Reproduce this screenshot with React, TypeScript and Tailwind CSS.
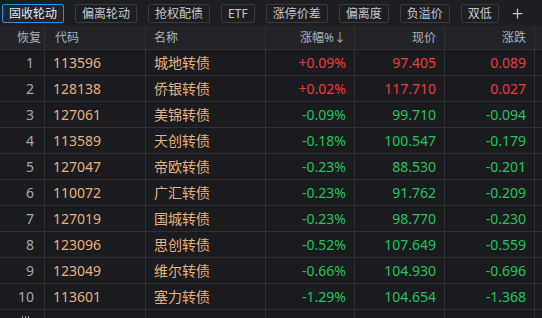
import { Plus } from "lucide-react";

type Row = {
    idx: number
    code: string
    name: string
    pct: string
    price: string
    chg: string
}

const rows: Row[] = [
    { idx: 1, code: "113596", name: "城地转债", pct: "+0.09%", price: "97.405", chg: "0.089" },
    { idx: 2, code: "128138", name: "侨银转债", pct: "+0.02%", price: "117.710", chg: "0.027" },
    { idx: 3, code: "127061", name: "美锦转债", pct: "-0.09%", price: "99.710", chg: "-0.094" },
    { idx: 4, code: "113589", name: "天创转债", pct: "-0.18%", price: "100.547", chg: "-0.179" },
    { idx: 5, code: "127047", name: "帝欧转债", pct: "-0.23%", price: "88.530", chg: "-0.201" },
    { idx: 6, code: "110072", name: "广汇转债", pct: "-0.23%", price: "91.762", chg: "-0.209" },
    { idx: 7, code: "127019", name: "国城转债", pct: "-0.23%", price: "98.770", chg: "-0.230" },
    { idx: 8, code: "123096", name: "思创转债", pct: "-0.52%", price: "107.649", chg: "-0.559" },
    { idx: 9, code: "123049", name: "维尔转债", pct: "-0.66%", price: "104.930", chg: "-0.696" },
    { idx: 10, code: "113601", name: "塞力转债", pct: "-1.29%", price: "104.654", chg: "-1.368" },
]

const tabs = ["固收轮动", "偏离轮动", "抢权配债", "ETF", "涨停价差", "偏离度", "负溢价", "双低"]

function App() {
    return (
        <div
            className="h-[318px] w-[542px] overflow-hidden bg-[#1b1c20] text-[14px]"
            style={{ fontFamily: '"Noto Sans", "Noto Sans CJK SC", sans-serif' }}
        >
            {/* Tab bar */}
            <div className="flex h-[26px] items-start gap-[11px] bg-[#1e1f23] pl-[2px] pt-[4px]">
                {tabs.map((t, i) => (
                    <button
                        key={t}
                        className={
                            i === 0
                                ? "flex h-[19px] items-center rounded-[2px] border border-[#1d8fe6] bg-[#1f2630] px-[6px] text-[12px] leading-none text-[#e6e9ee]"
                                : "flex h-[19px] items-center rounded-[2px] border border-[#3a3b40] bg-[#1e1f23] px-[6px] text-[12px] leading-none text-[#c3c6cc]"
                        }
                    >
                        {t}
                    </button>
                ))}
                <div className="flex h-[19px] items-center text-[#c8c8c8]">
                    <Plus size={15} strokeWidth={2} />
                </div>
            </div>

            {/* Header */}
            <div className="flex h-[24px] items-center border-b border-[#303136] bg-[#232428] text-[12px] text-[#a9b2be]">
                <div className="flex h-full w-[45px] items-center justify-end border-r border-[#303136] pr-[3px]">恢复</div>
                <div className="flex h-full w-[101px] items-center border-r border-[#303136] pl-[10px]">代码</div>
                <div className="flex h-full w-[120px] items-center border-r border-[#303136] pl-[8px]">名称</div>
                <div className="flex h-full w-[89px] items-center justify-end border-r border-[#303136] pr-[8px]">涨幅%↓</div>
                <div className="flex h-full w-[90px] items-center justify-end border-r border-[#303136] pr-[8px]">现价</div>
                <div className="flex h-full w-[90px] items-center justify-end border-r border-[#303136] pr-[8px]">涨跌</div>
                <div className="h-full flex-1" />
            </div>

            {/* Rows */}
            {rows.map((r) => {
                const color = r.pct.startsWith("-") ? "text-[#20c45a]" : "text-[#f0383c]"
                return (
                    <div key={r.idx} className="flex h-[26px] items-center border-b border-[#303136]">
                        <div className="flex h-full w-[45px] items-center justify-end border-r border-[#303136] pr-[10px] text-[#a6a7ab]">
                            {r.idx}
                        </div>
                        <div className="flex h-full w-[101px] items-center border-r border-[#303136] pl-[8px] text-[#e6b07c]">
                            {r.code}
                        </div>
                        <div className="flex h-full w-[120px] items-center border-r border-[#303136] pl-[8px] text-[#e6b07c]">
                            {r.name}
                        </div>
                        <div className={`flex h-full w-[89px] items-center justify-end border-r border-[#303136] pr-[8px] ${color}`}>
                            {r.pct}
                        </div>
                        <div className={`flex h-full w-[90px] items-center justify-end border-r border-[#303136] pr-[8px] ${color}`}>
                            {r.price}
                        </div>
                        <div className={`flex h-full w-[90px] items-center justify-end border-r border-[#303136] pr-[8px] ${color}`}>
                            {r.chg}
                        </div>
                        <div className="h-full flex-1" />
                    </div>
                )
            })}

            {/* Partially visible next row */}
            <div className="flex h-[26px]">
                <div className="flex h-full w-[45px] items-start gap-[2px] border-r border-[#303136] pl-[22px] pt-[6px]">
                    <span className="h-[3px] w-[1px] bg-[#a6a7ab]" />
                    <span className="h-[3px] w-[1px] bg-[#a6a7ab]" />
                    <span className="h-[3px] w-[1px] bg-[#a6a7ab]" />
                </div>
                <div className="h-full w-[101px] border-r border-[#303136]" />
                <div className="h-full w-[120px] border-r border-[#303136]" />
                <div className="h-full w-[89px] border-r border-[#303136]" />
                <div className="h-full w-[90px] border-r border-[#303136]" />
                <div className="h-full w-[90px] border-r border-[#303136]" />
            </div>
        </div>
    );
}

export default App;
